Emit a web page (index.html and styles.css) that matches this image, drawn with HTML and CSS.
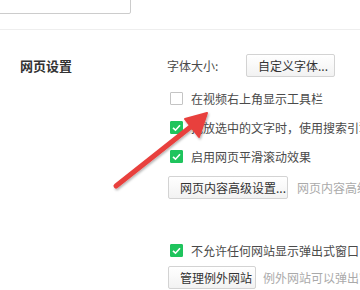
FILE: index.html
```html
<!DOCTYPE html>
<html>
<head>
<meta charset="utf-8">
<link rel="stylesheet" href="styles.css">
</head>
<body>
<div class="page">
  <div class="top"><div class="search"></div></div>
  <div class="section">
    <div class="label">网页设置</div>
    <div class="options">
      <div class="row font-row">
        <span class="font-label">字体大小:</span>
        <button class="btn btn-font">自定义字体...</button>
      </div>
      <div class="row check-row first">
        <span class="box"></span>
        <span class="text">在视频右上角显示工具栏</span>
      </div>
      <div class="row check-row">
        <span class="box on"><svg viewBox="0 0 13 13" width="13" height="13"><path d="M3 6.8 L5.5 9.2 L10 4.2" fill="none" stroke="#fff" stroke-width="1.6"/></svg></span>
        <span class="text">拖放选中的文字时，使用搜索引擎搜索</span>
      </div>
      <div class="row check-row">
        <span class="box on"><svg viewBox="0 0 13 13" width="13" height="13"><path d="M3 6.8 L5.5 9.2 L10 4.2" fill="none" stroke="#fff" stroke-width="1.6"/></svg></span>
        <span class="text">启用网页平滑滚动效果</span>
      </div>
      <div class="row btn-row">
        <button class="btn btn-adv">网页内容高级设置...</button>
        <span class="hint hint-adv">网页内容高级设置</span>
      </div>
      <div class="row check-row popup">
        <span class="box on"><svg viewBox="0 0 13 13" width="13" height="13"><path d="M3 6.8 L5.5 9.2 L10 4.2" fill="none" stroke="#fff" stroke-width="1.6"/></svg></span>
        <span class="text">不允许任何网站显示弹出式窗口</span>
      </div>
      <div class="row btn-row last">
        <button class="btn btn-exc">管理例外网站</button>
        <span class="hint hint-exc">例外网站可以弹出窗口</span>
      </div>
    </div>
  </div>
  <svg class="arrow" width="360" height="290" viewBox="0 0 360 290">
    <defs>
      <filter id="sh" x="-20%" y="-20%" width="140%" height="140%">
        <feDropShadow dx="1" dy="1.5" stdDeviation="1.2" flood-color="#000" flood-opacity="0.3"/>
      </filter>
    </defs>
    <g filter="url(#sh)">
      <line x1="116" y1="186" x2="193" y2="125" stroke="#e8403d" stroke-width="5" stroke-linecap="round"/>
      <polygon points="207,113 185,119 199,137" fill="#e8403d" stroke="#e8403d" stroke-width="2" stroke-linejoin="round"/>
    </g>
  </svg>
</div>
</body>
</html>
```
FILE: styles.css
```css
html, body {
  margin: 0;
  padding: 0;
  background: #fff;
}
.page {
  position: relative;
  width: 360px;
  height: 290px;
  overflow: hidden;
  font-family: "Noto Sans CJK SC", "Microsoft YaHei", sans-serif;
  font-size: 12px;
  color: #4a4a4a;
}
.top {
  display: flow-root;
  height: 29px;
  border-bottom: 1px solid #eee;
}
.search {
  margin-top: -10px;
  margin-left: -10px;
  width: 139px;
  height: 22px;
  border: 1px solid #ccc;
  border-radius: 2px;
}
.section {
  display: grid;
  grid-template-columns: 167px 1fr;
  padding-top: 24px;
}
.label {
  padding-left: 20px;
  font-size: 13px;
  font-weight: bold;
  color: #333;
  line-height: 22px;
  padding-top: 1px;
}
.options {
  display: flex;
  flex-direction: column;
  white-space: nowrap;
}
.row {
  display: flex;
  align-items: center;
}
.font-row {
  height: 22px;
}
.font-label {
  width: 79px;
}
.btn {
  font-family: inherit;
  font-size: 12px;
  color: #333;
  height: 23px;
  padding: 0 11px;
  border: 1px solid #d3d3d3;
  border-radius: 2px;
  background: linear-gradient(#fff, #f2f2f2);
  margin: 0;
  line-height: 21px;
}
.btn-font { width: 89px; }
.btn-adv { width: 120px; margin-left: 1px; }
.btn-exc { width: 88px; margin-left: 1px; }
.check-row {
  height: 16px;
  margin-top: 13px;
  padding-left: 3px;
}
.check-row.first { margin-top: 14px; }
.box {
  width: 11px;
  height: 11px;
  border: 1px solid #c4c4c4;
  border-radius: 1px;
  background: #fff;
  margin-right: 8px;
  flex: none;
  position: relative;
}
.box.on {
  background: #1fc45d;
  border-color: #1fc45d;
}
.box svg {
  position: absolute;
  left: -1px;
  top: -1px;
}
.btn-row {
  margin-top: 12px;
}
.popup { margin-top: 43px; }
.btn-row.last { margin-top: 8px; }
.hint {
  color: #aaa;
}
.hint-adv { margin-left: 9px; }
.hint-exc { margin-left: 7px; }
.arrow {
  position: absolute;
  left: 0;
  top: 0;
  pointer-events: none;
}
```
